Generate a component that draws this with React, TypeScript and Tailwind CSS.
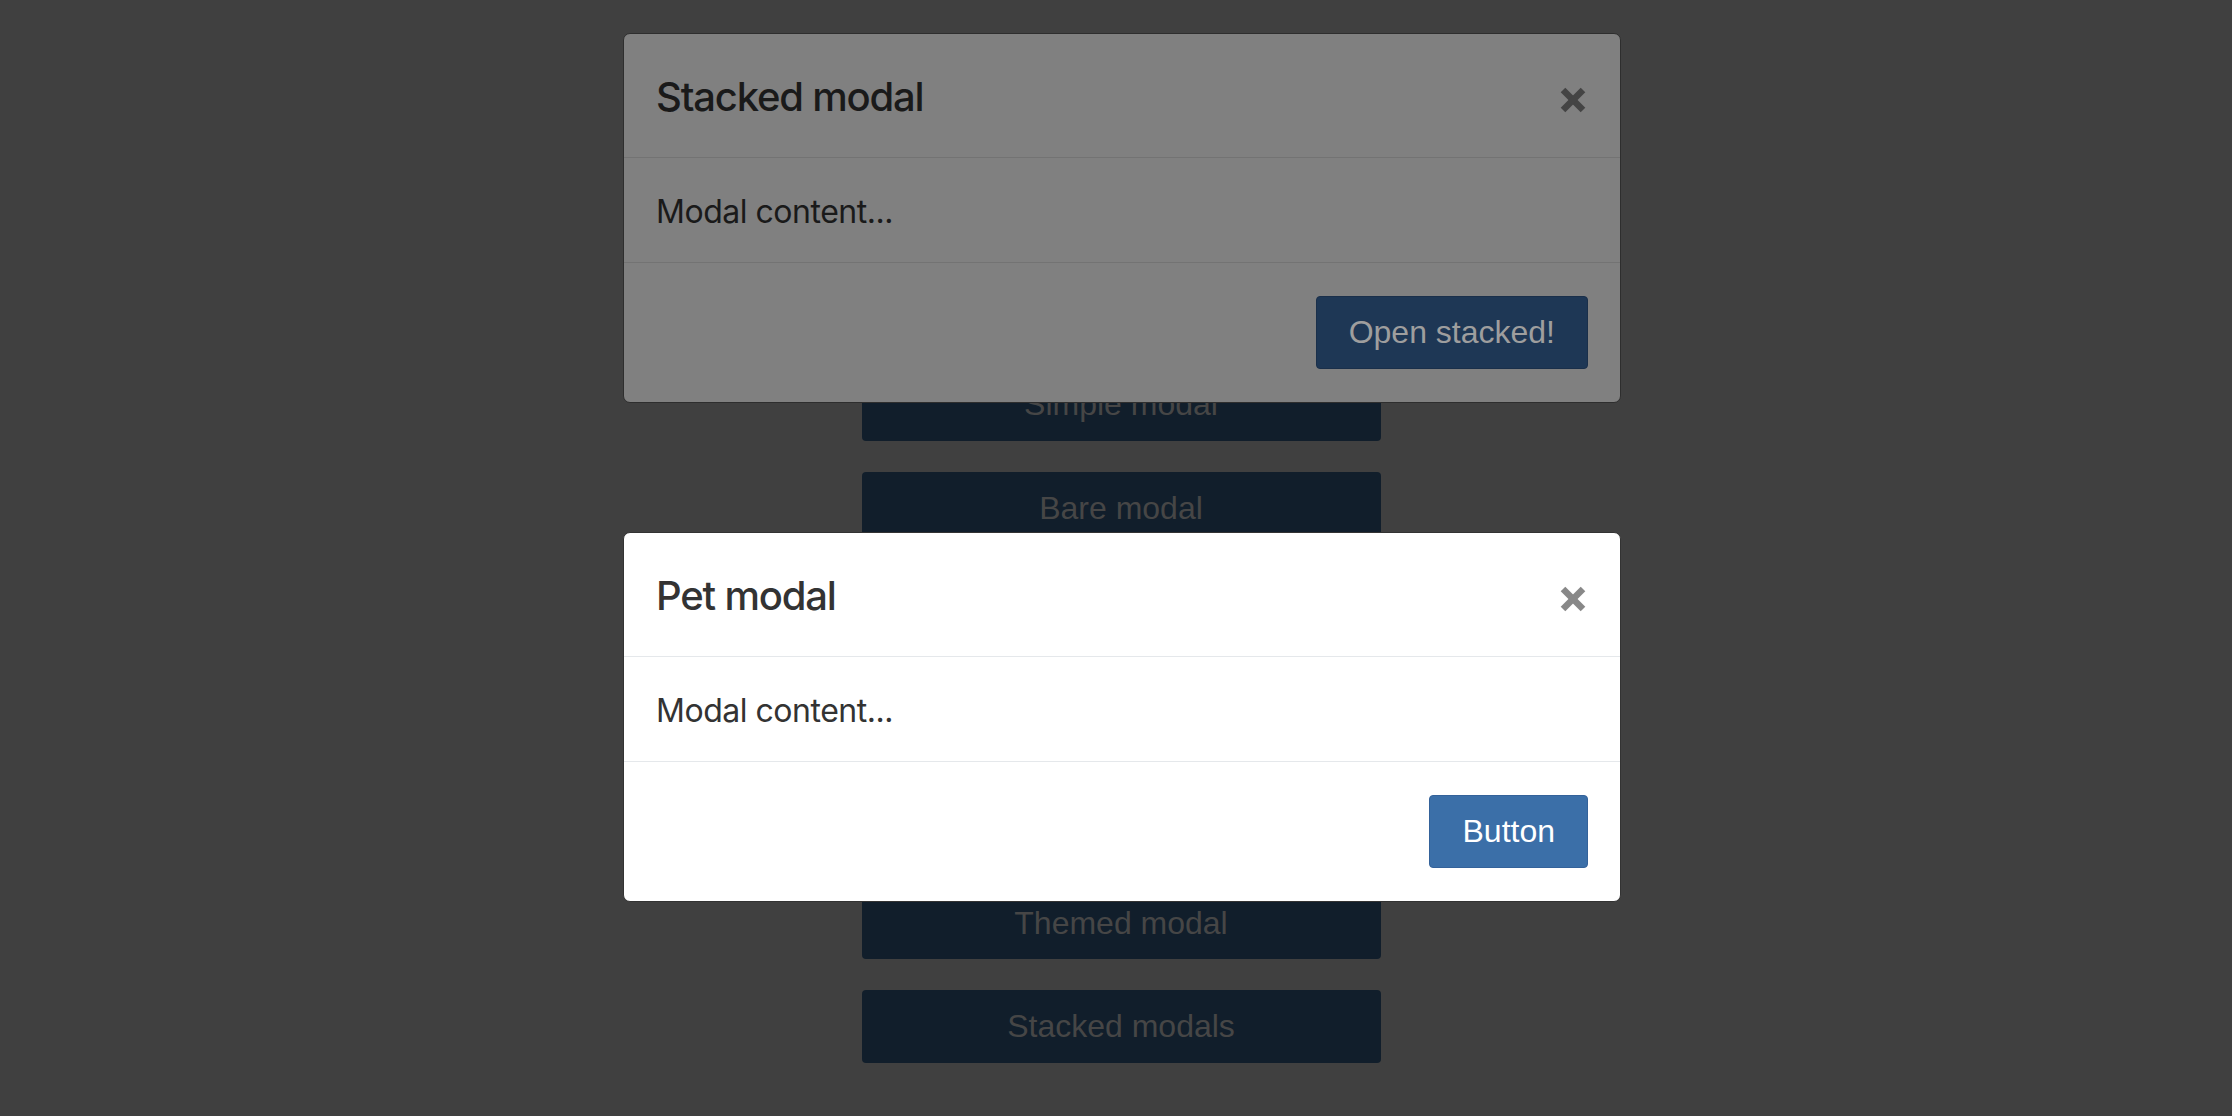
import React from "react";

const bgButtons = [
  "Modal",
  "Modal with props",
  "Custom modal",
  "Simple modal",
  "Bare modal",
  "Form modal",
  "Scrollable modal",
  "Async modal",
  "Themed modal",
  "Stacked modals",
];

function CloseX({ color }: { color: string }) {
  return (
    <svg width="26" height="26" viewBox="0 0 26 26">
      <line x1="3" y1="3" x2="23" y2="23" stroke={color} strokeWidth="6.5" />
      <line x1="23" y1="3" x2="3" y2="23" stroke={color} strokeWidth="6.5" />
    </svg>
  );
}

export default function App() {
  return (
    <div className="relative h-[1116px] w-full overflow-hidden bg-[#404040]">
      {/* page buttons under the backdrop */}
      <div className="flex flex-col items-center gap-[30.67px] pt-[57px] pl-[10px]">
        {bgButtons.map((b) => (
          <div
            key={b}
            className="flex h-[73px] w-[519px] items-center justify-center rounded-[4px] bg-[#111e2b] text-[32px] text-[#464646] [font-family:'Liberation_Sans',Arial,sans-serif]"
          >
            {b}
          </div>
        ))}
      </div>

      {/* stacked (dimmed) modal */}
      <div className="absolute left-[623px] top-[33px] w-[998px] rounded-[7px] border border-[#2e2e2e] bg-[#808080]">
        <div className="flex h-[124px] items-center justify-between border-b border-[#737373] pl-[32px] pr-[34px]">
          <div className="pt-[2px] text-[40px] font-medium tracking-[-0.03em] text-[#1a1a1a] [font-family:Inter,'Liberation_Sans',sans-serif]">
            Stacked modal
          </div>
          <div className="pt-[8px]">
            <CloseX color="#444444" />
          </div>
        </div>
        <div className="flex h-[105px] items-center border-b border-[#737373] px-[32px] pt-[3px] text-[32px] tracking-[-0.015em] text-[#1a1a1a] [font-family:Inter,'Liberation_Sans',sans-serif]">
          Modal content...
        </div>
        <div className="flex h-[139px] items-center justify-end px-[32px] pb-[1px]">
          <div className="flex h-[73px] items-center rounded-[4px] border border-[#1a2f4a] bg-[#1e3755] px-[32px] text-[32px] text-[#9e9e9e] [font-family:'Liberation_Sans',Arial,sans-serif]">
            Open stacked!
          </div>
        </div>
      </div>

      {/* pet modal (active) */}
      <div className="absolute left-[623px] top-[532px] w-[998px] rounded-[7px] border border-[#333333] bg-white">
        <div className="flex h-[124px] items-center justify-between border-b border-[#e5e8eb] pl-[32px] pr-[34px]">
          <div className="pt-[2px] text-[40px] font-medium tracking-[-0.03em] text-[#333333] [font-family:Inter,'Liberation_Sans',sans-serif]">
            Pet modal
          </div>
          <div className="pt-[8px]">
            <CloseX color="#888888" />
          </div>
        </div>
        <div className="flex h-[105px] items-center border-b border-[#e5e8eb] px-[32px] pt-[3px] text-[32px] tracking-[-0.015em] text-[#333333] [font-family:Inter,'Liberation_Sans',sans-serif]">
          Modal content...
        </div>
        <div className="flex h-[139px] items-center justify-end px-[32px] pb-[1px]">
          <div className="flex h-[73px] items-center rounded-[4px] border border-[#34629a] bg-[#3b6fa8] px-[32px] text-[32px] text-white [font-family:'Liberation_Sans',Arial,sans-serif]">
            Button
          </div>
        </div>
      </div>
    </div>
  );
}
